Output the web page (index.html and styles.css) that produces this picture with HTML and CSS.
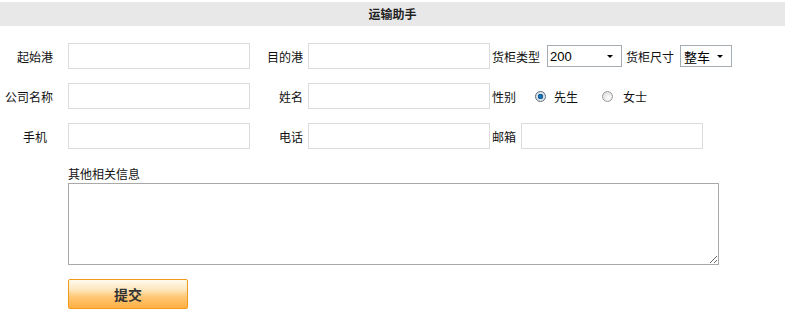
FILE: index.html
```html
<!DOCTYPE html>
<html lang="zh-CN">
  <head>
    <meta charset="UTF-8" />
    <title>运输助手</title>
    <link rel="stylesheet" href="styles.css">
  </head>
  <body>
    <h1 class="title">运输助手</h1>

    <form class="form">
      <div class="row">
        <label class="lbl">起始港</label>
        <input class="text" type="text" />
        <label class="lbl2">目的港</label>
        <input class="text" type="text" />
        <label class="lbl3">货柜类型</label>
        <span class="sel sel-type">
          <select><option>200</option></select>
        </span>
        <label class="lbl-size">货柜尺寸</label>
        <span class="sel sel-size">
          <select><option>整车</option></select>
        </span>
      </div>

      <div class="row">
        <label class="lbl">公司名称</label>
        <input class="text" type="text" />
        <label class="lbl2">姓名</label>
        <input class="text" type="text" />
        <label class="lbl3">性别</label>
        <input class="radio first" type="radio" name="sex" id="m" checked />
        <label for="m" class="opt">先生</label>
        <input class="radio second" type="radio" name="sex" id="f" />
        <label for="f" class="opt opt-f">女士</label>
      </div>

      <div class="row">
        <label class="lbl lbl-short">手机</label>
        <input class="text" type="text" />
        <label class="lbl2">电话</label>
        <input class="text" type="text" />
        <label class="lbl3">邮箱</label>
        <input class="text mail" type="text" />
      </div>

      <div class="more">
        <label class="more-lbl">其他相关信息</label>
        <textarea class="memo"></textarea>
        <button type="button" class="submit">提交</button>
      </div>
    </form>
  </body>
</html>
```

FILE: styles.css
```css
body {
  margin: 0;
  padding-top: 2px;
  background: #fff;
  font-family: 'Noto Sans CJK SC', 'Liberation Sans', sans-serif;
  font-size: 12px;
  color: #111;
}

.title {
  margin: 0;
  height: 24px;
  line-height: 24px;
  background: #e8e8e8;
  text-align: center;
  font-size: 12px;
  font-weight: bold;
  color: #222;
}

.form {
  padding-top: 17px;
}

.row {
  display: flex;
  align-items: center;
  height: 26px;
  margin-bottom: 14px;
}

.lbl {
  width: 53px;
  margin-right: 15px;
  text-align: right;
}

.lbl-short {
  width: 47px;
  margin-right: 21px;
}

.lbl2 {
  width: 53px;
  margin-right: 5px;
  text-align: right;
}

.lbl3 {
  margin-left: 2px;
}

.text {
  box-sizing: border-box;
  width: 182px;
  height: 26px;
  margin: 0;
  border: 1px solid #dcdcdc;
  background: #fff;
}

.mail {
  margin-left: 5px;
}

.sel {
  position: relative;
  display: inline-block;
  height: 22px;
}

.sel select {
  appearance: none;
  box-sizing: border-box;
  width: 100%;
  height: 22px;
  margin: 0;
  padding: 0 0 0 2px;
  border: 1px solid #a5acb2;
  border-radius: 0;
  background: #fff;
  font-family: 'Liberation Sans', 'Noto Sans CJK SC', sans-serif;
  font-size: 13px;
  color: #000;
}

.sel::after {
  content: '';
  position: absolute;
  right: 9px;
  top: 10px;
  border-left: 3px solid transparent;
  border-right: 3px solid transparent;
  border-top: 3px solid #000;
  pointer-events: none;
}

.sel-type {
  width: 75px;
  margin-left: 7px;
}

.sel-size {
  width: 52px;
  margin-left: 6px;
}

.sel-size select {
  font-family: 'Noto Sans CJK SC', sans-serif;
  padding-left: 3px;
}

.lbl-size {
  margin-left: 4px;
}

.radio {
  appearance: none;
  box-sizing: border-box;
  width: 11px;
  height: 11px;
  margin: 0;
  border: 1px solid #9a9a9a;
  border-radius: 50%;
  background: radial-gradient(circle at 60% 65%, #fdfdfd 0, #e2e2e2 70%, #cfcfcf 100%);
}

.radio:checked {
  border-color: #5a6d80;
  background: radial-gradient(circle, #1a7fc4 0, #0e5d99 2.5px, #d7dde3 3px, #eef1f4 100%);
}

.first {
  margin-left: 19px;
}

.second {
  margin-left: 24px;
}

.opt {
  margin-left: 8px;
}

.opt-f {
  margin-left: 10px;
}

.more {
  padding-left: 68px;
  padding-top: 2px;
}

.more-lbl {
  display: block;
  height: 18px;
  line-height: 18px;
}

.memo {
  display: block;
  box-sizing: border-box;
  width: 651px;
  height: 82px;
  margin: 0;
  border: 1px solid #a9a9a9;
}

.submit {
  display: block;
  box-sizing: border-box;
  width: 120px;
  height: 30px;
  margin-top: 14px;
  border: 1px solid #f39a1b;
  border-radius: 2px;
  background: linear-gradient(#fffaf0 0, #fde6bc 35%, #ffc877 60%, #ffb043 100%);
  box-shadow: 0 2px 1px #e0e0e0;
  font-family: 'Noto Sans CJK SC', sans-serif;
  font-size: 14px;
  font-weight: bold;
  color: #333;
}
```
